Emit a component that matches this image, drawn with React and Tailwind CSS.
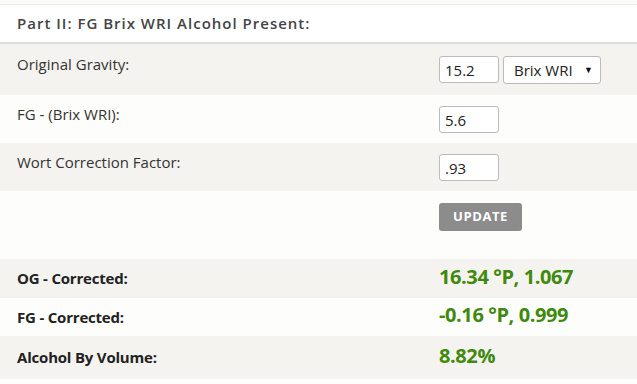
import React, { useState } from "react";

const InputRow = ({ label, shade, children }) => (
  <div className={`flex h-[48px] items-start ${shade ? "bg-[#f4f3f0]" : "bg-[#fdfdfb]"}`}>
    <div className="w-[439px] pl-[17px] pt-[8px] text-[15px] text-[#333]">{label}</div>
    <div className="flex gap-[4px] pt-[11px]">{children}</div>
  </div>
);

const ResultRow = ({ label, value, shade, h }) => (
  <div className={`flex items-center ${h} ${shade ? "bg-[#f4f3f0]" : "bg-[#fdfdfb]"}`}>
    <div className="w-[439px] pl-[17px] text-[15px] font-bold tracking-[-0.2px] text-[#222]">{label}</div>
    <div className="-mt-[4px] text-[20px] font-bold tracking-[-0.4px] text-[#3f8a0c]">{value}</div>
  </div>
);

const Field = ({ value, onChange }) => (
  <input
    value={value}
    onChange={(e) => onChange(e.target.value)}
    className="h-[27px] w-[60px] rounded-[3px] border border-[#bbb] bg-white px-[5px] text-[15px] text-[#222] outline-none"
  />
);

export default function App() {
  const [og, setOg] = useState("15.2");
  const [fg, setFg] = useState("5.6");
  const [wcf, setWcf] = useState(".93");

  return (
    <div className="h-[384px] w-[637px] bg-[#fdfdfb] font-['Open_Sans',sans-serif]">
      <div className="h-[5px] border-b border-[#eeeeea] bg-[#fafaf8]" />
      <div className="flex h-[39px] items-center border-b-2 border-[#dcdcdc] bg-white pl-[17px] text-[15px] font-semibold tracking-[1px] text-[#444]">
        Part II: FG Brix WRI Alcohol Present:
      </div>
      <div className="flex h-[51px] items-start bg-[#f4f3f0]">
        <div className="w-[439px] pl-[17px] pt-[9px] text-[15px] text-[#333]">Original Gravity:</div>
        <div className="flex gap-[4px] pt-[12px]">
          <Field value={og} onChange={setOg} />
          <div className="flex h-[28px] w-[98px] items-center justify-between rounded-[3px] border border-[#bbb] bg-white pl-[10px] pr-[7px] text-[15px] text-[#222]">
            <span>Brix WRI</span>
            <span className="text-[9px] text-[#111]">▼</span>
          </div>
        </div>
      </div>
      <InputRow label="FG - (Brix WRI):">
        <Field value={fg} onChange={setFg} />
      </InputRow>
      <InputRow label="Wort Correction Factor:" shade>
        <Field value={wcf} onChange={setWcf} />
      </InputRow>
      <div className="flex h-[68px] items-start bg-[#fdfdfb] pl-[439px] pt-[12px]">
        <button className="h-[28px] w-[83px] rounded-[3px] bg-[#8c8c8c] text-[13px] font-bold tracking-[0.6px] text-white">
          UPDATE
        </button>
      </div>
      <ResultRow label="OG - Corrected:" value="16.34 °P, 1.067" shade h="h-[39px]" />
      <ResultRow label="FG - Corrected:" value="-0.16 °P, 0.999" h="h-[38px]" />
      <ResultRow label="Alcohol By Volume:" value="8.82%" shade h="h-[43px]" />
    </div>
  );
}
